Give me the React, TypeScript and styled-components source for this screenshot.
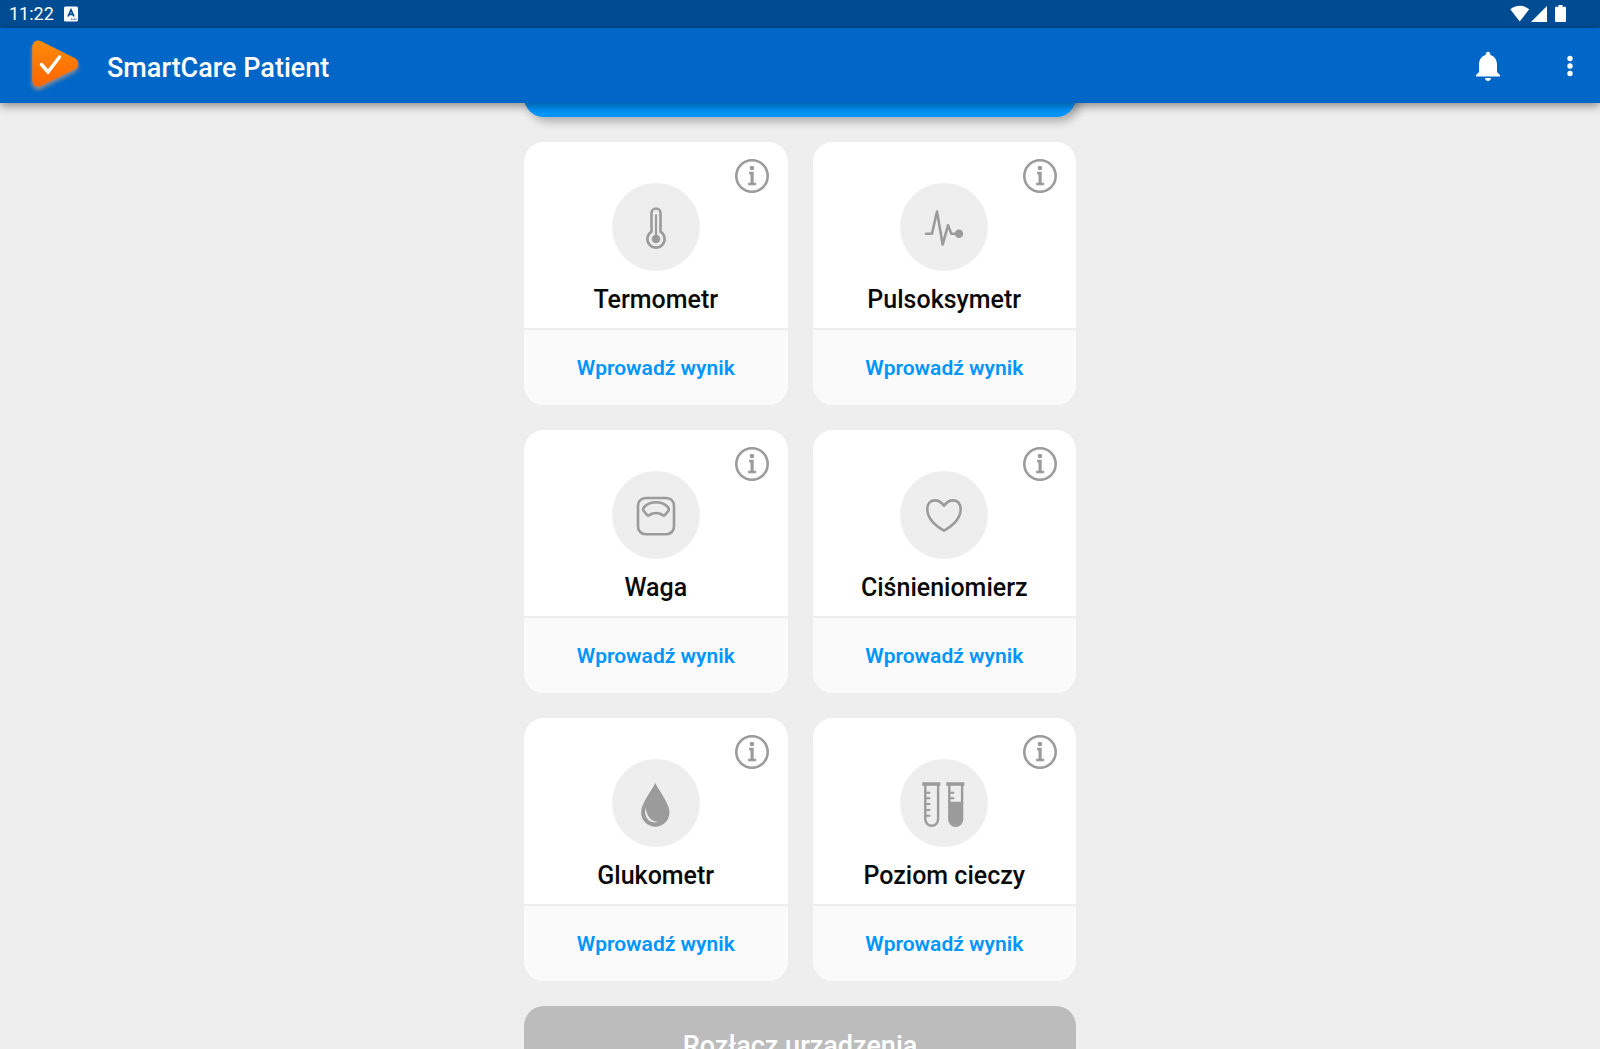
import React from "react";
import styled, { createGlobalStyle } from "styled-components";

const GlobalStyle = createGlobalStyle`
  *, *::before, *::after { box-sizing: border-box; }
  body {
    margin: 0;
    background: #eeeeee;
    color: #0a0a0a;
    font-family: Roboto, "Noto Sans", sans-serif;
  }
  button { font: inherit; border: 0; padding: 0; background: none; cursor: pointer; }
  svg { display: block; }
`;

const Screen = styled.div`
  height: 100vh;
  display: flex;
  flex-direction: column;
  overflow: hidden;
`;

const StatusBar = styled.div`
  flex: none;
  height: 28px;
  padding: 0 32px 0 9px;
  display: flex;
  align-items: center;
  justify-content: space-between;
  background: #004c93;
  color: #fff;
  font-size: 18px;
  line-height: 28px;
`;

const StatusGroup = styled.div`
  display: flex;
  align-items: center;
  gap: 10px;
`;

const AppBar = styled.header`
  flex: none;
  position: relative;
  z-index: 1;
  height: 75px;
  padding: 0 14px 0 28px;
  display: flex;
  align-items: center;
  background: #0066c8;
  color: #fff;
  box-shadow: 0 3px 9px rgba(0, 0, 0, 0.42);
`;

const AppTitle = styled.h1`
  flex: 1;
  margin: 0 0 0 23px;
  padding-top: 4px;
  font-size: 27px;
  line-height: 32px;
  font-weight: 500;
`;

const BarActions = styled.div`
  display: flex;
  align-items: center;
  gap: 48px;
`;

const IconButton = styled.button`
  color: inherit;
  display: flex;
`;

const Content = styled.main`
  flex: 1;
  min-height: 0;
  overflow: hidden;
`;

const Column = styled.div`
  width: 100%;
  max-width: 552px;
  margin: 0 auto;
  display: flex;
  flex-direction: column;
  gap: 25px;
`;

const Banner = styled.div`
  height: 74px;
  margin-top: -60px;
  border-radius: 20px;
  background: #0096ff;
  box-shadow: 4px 4px 10px rgba(0, 0, 0, 0.3);
`;

const Grid = styled.div`
  display: grid;
  grid-template-columns: 1fr 1fr;
  gap: 25px;
`;

const Card = styled.article`
  position: relative;
  height: 263px;
  display: flex;
  flex-direction: column;
  border-radius: 20px;
  overflow: hidden;
  background: #fff;
`;

const InfoButton = styled.button`
  position: absolute;
  top: 17px;
  right: 19px;
  color: #9b9b9b;
`;

const CardBody = styled.div`
  flex: 1;
  padding-top: 41px;
  display: flex;
  flex-direction: column;
  align-items: center;
  gap: 13px;
`;

const IconDisc = styled.div`
  width: 88px;
  height: 88px;
  border-radius: 50%;
  background: #eeeeee;
  color: #9b9b9b;
`;

const CardTitle = styled.h2`
  margin: 0;
  font-size: 25px;
  line-height: 32px;
  font-weight: 500;
`;

const CardAction = styled.button`
  && {
    height: 77px;
    border-top: 2px solid #eeeeee;
    background: #fafafa;
    color: #0096ff;
    font-size: 21px;
    line-height: 28px;
    font-weight: 600;
  }
`;

const DisconnectButton = styled.button`
  && {
    flex: none;
    height: 80px;
    border-radius: 20px;
    background: #bcbcbc;
    color: #fff;
    font-size: 27px;
    line-height: 32px;
    font-weight: 500;
  }
`;

function Logo() {
  return (
    <svg width="56" height="60" viewBox="0 0 56 60" aria-hidden="true">
      <defs>
        <linearGradient id="logoFill" x1="0" y1="0" x2="0" y2="1">
          <stop offset="0" stopColor="#ff8c0a" />
          <stop offset="1" stopColor="#ff6400" />
        </linearGradient>
        <filter id="logoGlow" x="-20%" y="-20%" width="140%" height="140%">
          <feGaussianBlur stdDeviation="2" />
        </filter>
      </defs>
      <path
        d="M4 10a6 6 0 0 1 9-5L47 21.500a6 6 0 0 1 0 10.500L13 49a6 6 0 0 1-9-5z"
        fill="#c99a78"
        opacity="0.75"
        filter="url(#logoGlow)"
        transform="translate(0 4)"
      />
      <path
        d="M4.300 10.500a6 6 0 0 1 8.800-5.300L47 22.300a6 6 0 0 1 0 10.700L13.100 49.800a6 6 0 0 1-8.800-5.300z"
        fill="url(#logoFill)"
      />
      <path
        d="M13.500 28.500l6.500 7.500 11.500-15"
        fill="none"
        stroke="#fff"
        strokeWidth="3.500"
        strokeLinecap="round"
      />
    </svg>
  );
}

function InfoIcon() {
  return (
    <svg width="34" height="34" viewBox="-17 -17 34 34" aria-hidden="true">
      <circle r="15.700" fill="none" stroke="currentColor" strokeWidth="2.600" />
      <circle cy="-8" r="2.300" fill="currentColor" />
      <path d="M-2.900 -4.200H1.700V6.700H4.100V9.200H-3.900V6.700H-1.500V-1.800H-2.900z" fill="currentColor" />
    </svg>
  );
}

const line = {
  fill: "none",
  stroke: "currentColor",
  strokeWidth: 2.6,
  strokeLinecap: "round" as const,
  strokeLinejoin: "round" as const,
};

const drawings = {
  thermometer: (
    <>
      <path d="M39.500 48.700V30a4.500 4.500 0 0 1 9 0V48.700A8.600 8.600 0 1 1 39.500 48.700z" {...line} />
      <path d="M44 32.300V56" {...line} strokeWidth={2.2} />
      <circle cx="44" cy="56" r="4.300" fill="currentColor" />
    </>
  ),
  pulse: (
    <>
      <path d="M26 50.700H32L37 28.500 42.700 61.500 48 42.300 51.300 50.700H58" {...line} />
      <circle cx="59" cy="50.700" r="4.200" fill="currentColor" />
    </>
  ),
  scale: (
    <>
      <rect x="26" y="27" width="36" height="36.200" rx="7.500" {...line} />
      <path
        d="M32.200 36C38.500 29.700 49.500 29.700 55.800 36Q57.800 38.200 56 40.300L53 43.800Q52 45 50.700 44.200C46.500 41.400 41.500 41.400 37.300 44.200Q36 45 35 43.800L32 40.300Q30.200 38.200 32.200 36z"
        {...line}
      />
    </>
  ),
  heart: (
    <path
      d="M44 34.700C41 30.500 38 29.400 35 29.400C30 29.400 27.300 33.200 27.300 38C27.300 47 35 54.500 44 59.700C53 54.500 60.700 47 60.700 38C60.700 33.200 58 29.400 53 29.400C50 29.400 47 30.500 44 34.700z"
      {...line}
    />
  ),
  drop: (
    <>
      <path
        d="M43.300 23.700C46.500 31.500 57.500 44 57.500 53.500A14.200 14.200 0 0 1 29.100 53.500C29.100 44 40.100 31.500 43.300 23.700z"
        fill="currentColor"
      />
      <path d="M34 48.500C30.800 57 37 65.500 46.700 63C39.500 62.800 34.200 57.500 34 48.500z" fill="#eeeeee" />
    </>
  ),
  tubes: (
    <g {...line} strokeWidth="2.400" strokeLinecap="butt">
      <path d="M22.300 25H40.300M46.300 25H64.300" strokeWidth="3.600" />
      <path d="M25.300 26V60.300a6.400 6.400 0 0 0 12.800 0V26M49.300 26V60.300a6.400 6.400 0 0 0 12.800 0V26" />
      <path d="M26 33.700H30.300M26 39.300H30.300M26 45H30.300M26 51H30.300M26 56.700H30.300M50 33.700H54.300M50 39.300H54.300" strokeWidth="2" />
      <path d="M49.500 42.700H62V60.300a6.300 6.300 0 0 1-12.500 0z" fill="currentColor" stroke="none" />
    </g>
  ),
};

type Device = { name: string; icon: keyof typeof drawings };

const devices: Device[] = [
  { name: "Termometr", icon: "thermometer" },
  { name: "Pulsoksymetr", icon: "pulse" },
  { name: "Waga", icon: "scale" },
  { name: "Ciśnieniomierz", icon: "heart" },
  { name: "Glukometr", icon: "drop" },
  { name: "Poziom cieczy", icon: "tubes" },
];

function DeviceCard({ name, icon }: Device) {
  return (
    <Card>
      <InfoButton aria-label={"Informacje: " + name}>
        <InfoIcon />
      </InfoButton>
      <CardBody>
        <IconDisc>
          <svg width="88" height="88" viewBox="0 0 88 88" aria-hidden="true">
            {drawings[icon]}
          </svg>
        </IconDisc>
        <CardTitle>{name}</CardTitle>
      </CardBody>
      <CardAction>Wprowadź wynik</CardAction>
    </Card>
  );
}

export default function App() {
  return (
    <Screen>
      <GlobalStyle />
      <StatusBar>
        <StatusGroup>
          <span>11:22</span>
          <svg width="14" height="16" viewBox="0 0 14 16" aria-hidden="true">
            <rect y="0.500" width="14" height="15" rx="1.500" fill="#fff" />
            <path d="M4 10.500L7 3.800l3 6.700M5.200 8.400h3.600" fill="none" stroke="#004c93" strokeWidth="1.700" />
            <path d="M7 13.200h5.500" stroke="#004c93" strokeWidth="1" strokeDasharray="1 0.500" />
          </svg>
        </StatusGroup>
        <svg width="58" height="18" viewBox="0 0 58 18" fill="#fff" aria-hidden="true">
          <path d="M0.300 4.300C5.500-0.400 14-0.400 19.200 4.300L9.700 16.500z" />
          <path d="M37 1v16H21z" />
          <path d="M48.500 0h4v1.800h2.500a1 1 0 0 1 1 1V16a1 1 0 0 1-1 1h-9a1 1 0 0 1-1-1V2.800a1 1 0 0 1 1-1h2.500z" />
        </svg>
      </StatusBar>
      <AppBar>
        <Logo />
        <AppTitle>SmartCare Patient</AppTitle>
        <BarActions>
          <IconButton aria-label="Powiadomienia">
            <svg width="36" height="36" viewBox="0 0 24 24" fill="currentColor" aria-hidden="true">
              <path d="M12 22c1.100 0 2-.9 2-2h-4c0 1.100.89 2 2 2zm6-6v-5c0-3.070-1.640-5.640-4.500-6.320V4c0-.83-.67-1.500-1.500-1.500s-1.500.67-1.500 1.500v.68C7.630 5.360 6 7.920 6 11v5l-2 2v1h16v-1l-2-2z" />
            </svg>
          </IconButton>
          <IconButton aria-label="Więcej opcji">
            <svg width="32" height="32" viewBox="-16 -16 32 32" fill="currentColor" aria-hidden="true">
              <circle cy="-7.500" r="2.700" />
              <circle r="2.700" />
              <circle cy="7.500" r="2.700" />
            </svg>
          </IconButton>
        </BarActions>
      </AppBar>
      <Content>
        <Column>
          <Banner />
          <Grid>
            {devices.map((d) => (
              <DeviceCard key={d.name} {...d} />
            ))}
          </Grid>
          <DisconnectButton>Rozłącz urządzenia</DisconnectButton>
        </Column>
      </Content>
    </Screen>
  );
}
